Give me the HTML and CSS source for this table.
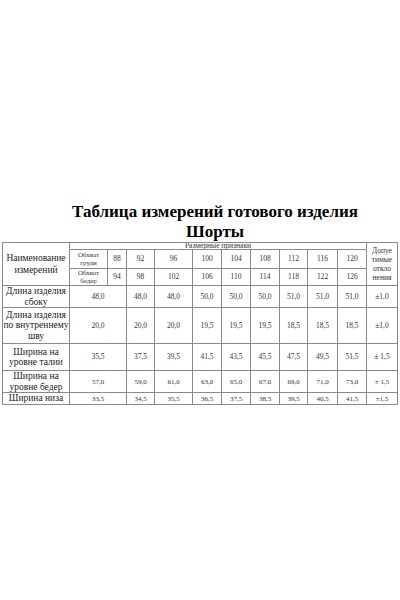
FILE: index.html
```html
<!DOCTYPE html>
<html>
<head>
<meta charset="utf-8">
<link rel="stylesheet" href="styles.css">
</head>
<body>
<div class="page">
  <h1 class="title">Таблица измерений готового изделия<br>Шорты</h1>
  <table class="sizes">
    <colgroup>
      <col class="c0"><col class="c1"><col class="c2"><col class="c3"><col class="c4">
      <col class="c5"><col class="c6"><col class="c7"><col class="c8"><col class="c9">
      <col class="c10"><col class="c11">
    </colgroup>
    <tr class="r-top">
      <td rowspan="3" class="name head">Наименование<br>измерений</td>
      <td colspan="10" class="tiny">Размерные признаки</td>
      <td rowspan="3" class="tol-head">Допуе<br>тимые<br>откло<br>нения</td>
    </tr>
    <tr class="r-g">
      <td class="label">Обхват<br>груди</td>
      <td>88</td><td>92</td><td>96</td><td>100</td><td>104</td><td>108</td><td>112</td><td>116</td><td>120</td>
    </tr>
    <tr class="r-b">
      <td class="label">Обхват<br>бедер</td>
      <td>94</td><td>98</td><td>102</td><td>106</td><td>110</td><td>114</td><td>118</td><td>122</td><td>126</td>
    </tr>
    <tr class="r1">
      <td class="name">Длина изделия<br>сбоку</td>
      <td colspan="2">48,0</td><td>48,0</td><td>48,0</td><td>50,0</td><td>50,0</td><td>50,0</td><td>51,0</td><td>51,0</td><td>51,0</td><td>±1,0</td>
    </tr>
    <tr class="r2">
      <td class="name">Длина изделия<br>по внутреннему<br>шву</td>
      <td colspan="2">20,0</td><td>20,0</td><td>20,0</td><td>19,5</td><td>19,5</td><td>19,5</td><td>18,5</td><td>18,5</td><td>18,5</td><td>±1,0</td>
    </tr>
    <tr class="r3">
      <td class="name">Ширина на<br>уровне талии</td>
      <td colspan="2">35,5</td><td>37,5</td><td>39,5</td><td>41,5</td><td>43,5</td><td>45,5</td><td>47,5</td><td>49,5</td><td>51,5</td><td>± 1,5</td>
    </tr>
    <tr class="r4">
      <td class="name">Ширина на<br>уровне бедер</td>
      <td colspan="2" class="sm">57,0</td><td class="sm">59,0</td><td class="sm">61,0</td><td class="sm">63,0</td><td class="sm">65,0</td><td class="sm">67,0</td><td class="sm">69,0</td><td class="sm">71,0</td><td class="sm">73,0</td><td class="sm">± 1,5</td>
    </tr>
    <tr class="r5">
      <td class="name">Ширина низа</td>
      <td colspan="2" class="sm">33,5</td><td class="sm">34,5</td><td class="sm">35,5</td><td class="sm">36,5</td><td class="sm">37,5</td><td class="sm">38,5</td><td class="sm">39,5</td><td class="sm">40,5</td><td class="sm">41,5</td><td class="sm">±1,5</td>
    </tr>
  </table>
</div>
</body>
</html>
```

FILE: styles.css
```css
html, body {
  margin: 0;
  padding: 0;
  background: #ffffff;
}
.page {
  width: 400px;
  height: 600px;
  padding-top: 202px;
  box-sizing: border-box;
  font-family: "Liberation Serif", "Times New Roman", "DejaVu Serif", serif;
}
.title {
  margin: 0 0 1px 30px;
  font-family: "Liberation Serif", "Times New Roman", serif;
  font-size: 17px;
  line-height: 19.5px;
  font-weight: bold;
  text-align: center;
  color: #000;
}
.sizes {
  margin-left: 2px;
  width: 395px;
  border-collapse: collapse;
  table-layout: fixed;
  color: #333;
}
.sizes td {
  border: 1px solid #8a8a8a;
  padding: 0;
  text-align: center;
  vertical-align: middle;
  font-size: 7.5px;
  line-height: 8px;
  overflow: hidden;
  white-space: nowrap;
}
.c0 { width: 67px; }
.c1 { width: 38px; }
.c2 { width: 19px; }
.c3 { width: 28px; }
.c4 { width: 38px; }
.c5 { width: 29px; }
.c6 { width: 29px; }
.c7 { width: 29px; }
.c8 { width: 28px; }
.c9 { width: 30px; }
.c10 { width: 29px; }
.c11 { width: 31px; }
.sizes td.name {
  font-size: 9.5px;
  line-height: 10.5px;
  color: #222;
}
.sizes td.head {
  font-size: 9.5px;
  line-height: 12px;
}
.sizes td.tiny {
  font-size: 7.5px;
  line-height: 6px;
}
.sizes td.label {
  font-size: 7px;
  line-height: 8px;
}
.sizes td.tol-head {
  font-size: 7.5px;
  line-height: 9px;
}
.sizes td.sm {
  font-size: 7px;
}
.r-top { height: 7px; }
.r-g { height: 19px; }
.r-b { height: 17px; }
.r1 { height: 21px; }
.r2 { height: 36px; }
.r3 { height: 27px; }
.r4 { height: 19px; }
.r5 { height: 12px; }
```
